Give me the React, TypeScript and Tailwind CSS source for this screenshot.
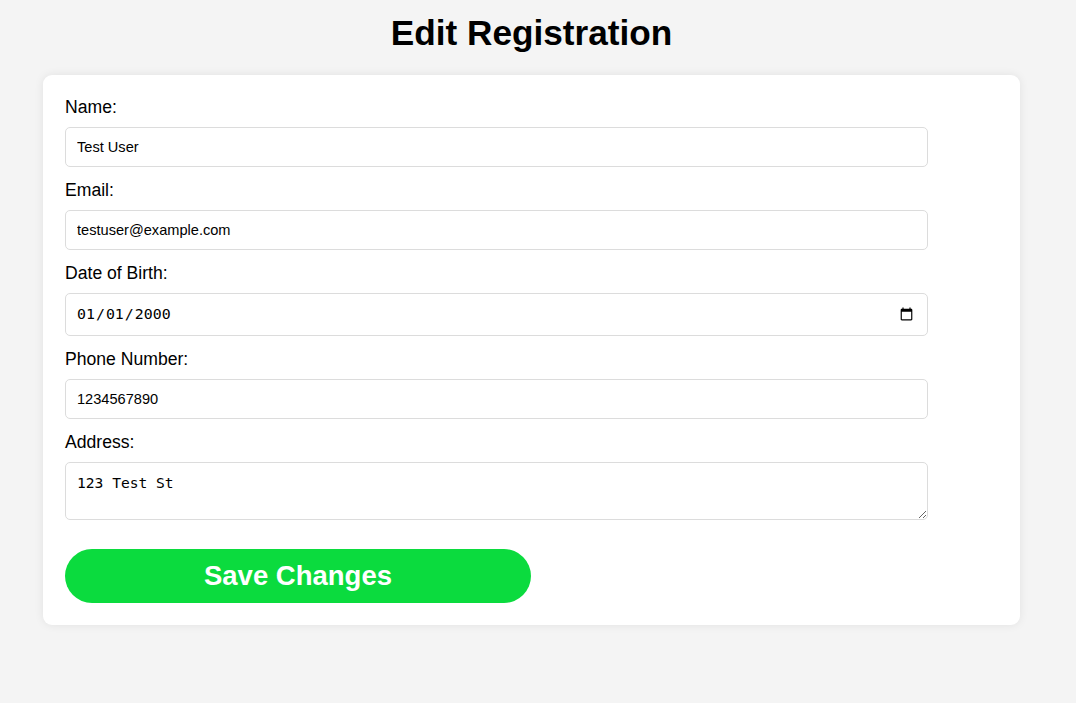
import React from "react";

const Field = ({ label, children }: { label: string; children: React.ReactNode }) => (
  <div className="flex flex-col">
    <label className="text-[17.6px] leading-[20px] text-black mb-[10px]">{label}</label>
    {children}
  </div>
);

const inputCls =
  "w-[863px] h-[40px] border border-[#dcdcdc] rounded-[5px] px-[11px] text-[14.6px] text-black bg-white outline-none";

const App = () => {
  return (
    <div className="min-h-[703px] bg-[#f4f4f4] font-['Liberation_Sans',Arial,sans-serif] pt-[13px]">
      <div className="w-[977px] ml-[43px]">
        <h1 className="text-center text-[35.2px] leading-[40px] font-bold text-black">
          Edit Registration
        </h1>
        <form className="mt-[22px] bg-white rounded-[9px] shadow-[0_0_10px_rgba(0,0,0,0.08)] px-[22px] pt-[22px] pb-[22px] flex flex-col gap-[13px]">
          <Field label="Name:">
            <input type="text" defaultValue="Test User" className={inputCls} />
          </Field>
          <Field label="Email:">
            <input type="email" defaultValue="testuser@example.com" className={inputCls} />
          </Field>
          <Field label="Date of Birth:">
            <input
              type="date"
              defaultValue="2000-01-01"
              className="w-[863px] h-[43px] border border-[#dcdcdc] rounded-[5px] pl-[10px] pr-[11px] text-[14.9px] text-black bg-white outline-none font-['DejaVu_Sans_Mono',monospace]"
            />
          </Field>
          <Field label="Phone Number:">
            <input type="tel" defaultValue="1234567890" className={inputCls} />
          </Field>
          <Field label="Address:">
            <textarea
              defaultValue="123 Test St"
              className="w-[863px] h-[58px] border border-[#dcdcdc] rounded-[5px] px-[11px] pt-[11px] text-[14.6px] leading-[17px] text-black bg-white outline-none font-['DejaVu_Sans_Mono',monospace] block"
            />
          </Field>
          <button
            type="button"
            className="mt-[16px] w-[466px] h-[54px] rounded-full bg-[#0bdb3e] text-white font-bold text-[27.5px]"
          >
            Save Changes
          </button>
        </form>
      </div>
    </div>
  );
};

export default App;
